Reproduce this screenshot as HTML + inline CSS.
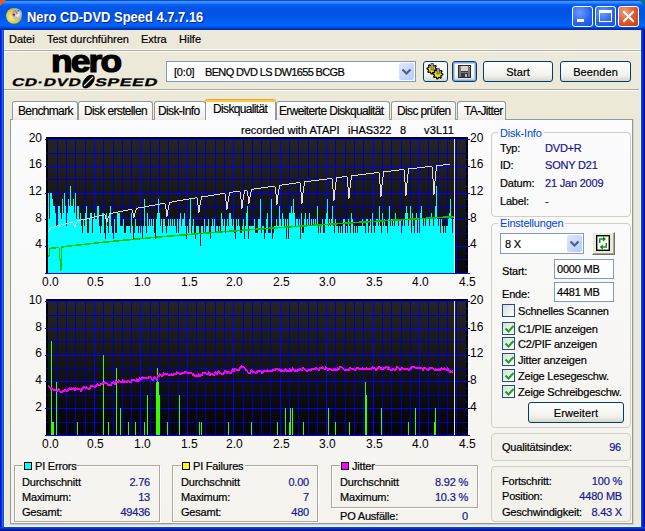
<!DOCTYPE html>
<html><head><meta charset="utf-8">
<style>
*{box-sizing:border-box}
html,body{margin:0;padding:0}
body{width:645px;height:531px;overflow:hidden;position:relative;background:#0a3fc8;font-family:"Liberation Sans",sans-serif;font-size:11px;color:#000}
.a{position:absolute}
.t{position:absolute;font-size:11px;line-height:12px;white-space:nowrap;letter-spacing:-0.2px;-webkit-text-stroke:0.2px currentColor}
.r{text-align:right}
.tt{position:absolute;font-size:12px;line-height:14px;white-space:nowrap;letter-spacing:-0.65px;-webkit-text-stroke:0.15px currentColor}
.v{color:#16168e}
#client{position:absolute;left:4px;top:30px;width:637px;height:497px;background:#ece9d8}
.tb{position:absolute;top:6px;width:21px;height:21px;border:1px solid #fff;border-radius:3px}
.btn{position:absolute;border:1px solid #003c74;border-radius:3px;background:linear-gradient(#fefefe,#f2f2ed 70%,#d8d6cc);text-align:center;font-size:11px;line-height:20px;letter-spacing:0.1px;-webkit-text-stroke:0.2px currentColor}
.tab{position:absolute;top:101px;height:19px;border:1px solid #919b9c;border-bottom:none;border-radius:3px 3px 0 0;background:linear-gradient(#fefefe,#f3f2ee 80%,#eae8e0);}
.gb{position:absolute;border:1px solid #d0d0bf;border-radius:4px}
.gl{position:absolute;color:#0046d5;background:#fafafa;padding:0 2px;font-size:11px;line-height:12px;letter-spacing:-0.2px}
.eg{position:absolute;border:1px solid #aca899;box-shadow:1px 1px 0 #fff, inset 1px 1px 0 #fff}
.cb{position:absolute;left:502px;width:13px;height:13px;border:1px solid #1c5180;background:linear-gradient(135deg,#dcdcd7,#fff)}
.ck{position:absolute;left:2px;top:2px}
</style></head><body>
<!-- title bar -->
<div class="a" style="left:0;top:0;width:645px;height:30px;border-radius:7px 7px 0 0;background:linear-gradient(#0a46d8 0,#0a46d8 0.5px,#3d95ff 1.5px,#3088fc 3px,#0a62f4 4.5px,#0056e8 7px,#0054e3 14px,#0058ea 18px,#0062f8 22px,#0062f8 26px,#004ad8 27.5px,#0030b8 29px,#0028a8 30px)"></div>
<div class="a" style="left:0;top:0;width:6px;height:6px;background:#e65a1e;clip-path:polygon(0 0,100% 0,0 100%)"></div>
<div class="a" style="left:639px;top:0;width:6px;height:6px;background:#0a6d8a;clip-path:polygon(0 0,100% 0,100% 100%)"></div>
<div class="a" style="left:0;top:30px;width:4px;height:501px;background:linear-gradient(90deg,#0010c0 0,#0010c0 1px,#0034e0 1px,#0034e0 2px,#1a6cf6 2px,#1a6cf6 3px,#0050e8 3px)"></div>
<div class="a" style="left:641px;top:30px;width:4px;height:501px;background:linear-gradient(90deg,#0044f0 0,#0044f0 1px,#0034dc 1px,#0034dc 2px,#0020b0 2px,#0020b0 3px,#00108c 3px)"></div>
<div class="a" style="left:0;top:527px;width:645px;height:4px;background:linear-gradient(#0044f0 0,#0044f0 1px,#0034dc 1px,#0034dc 2px,#0020b0 2px,#0020b0 3px,#00108c 3px)"></div>
<!-- app icon -->
<svg class="a" style="left:5px;top:6px" width="19" height="19" viewBox="0 0 19 19">
<defs><radialGradient id="dg" cx="0.35" cy="0.6" r="0.75"><stop offset="0" stop-color="#f4ec90"/><stop offset="0.55" stop-color="#dcc838"/><stop offset="1" stop-color="#b09a18"/></radialGradient>
<radialGradient id="bg2" cx="0.6" cy="0.6" r="0.6"><stop offset="0" stop-color="#ffffff"/><stop offset="1" stop-color="#58a8e8"/></radialGradient></defs>
<circle cx="9" cy="9.8" r="7.9" fill="url(#dg)"/>
<circle cx="11.7" cy="7.7" r="4.6" fill="url(#bg2)" stroke="#b8b8c0" stroke-width="1.2"/>
<path d="M10 4.5 L12.6 8.2" stroke="#f06a30" stroke-width="1.6"/>
<circle cx="9" cy="8.6" r="1.2" fill="#c01010"/>
<circle cx="13.5" cy="4.6" r="1" fill="#20a040"/>
<circle cx="9.6" cy="6.2" r="0.8" fill="#f0d020"/>
</svg>
<div class="a" style="left:27px;top:9px;font-size:14.5px;font-weight:bold;color:#fff;line-height:17px;text-shadow:1px 1px 0 #0a1e8c;letter-spacing:0px;transform-origin:0 0;transform:scaleX(0.893)">Nero CD-DVD Speed 4.7.7.16</div>
<!-- title buttons -->
<div class="tb" style="left:572px;background:radial-gradient(circle at 35% 30%,#6a9cff,#2a62f0 60%,#1a4ed8)"><div class="a" style="left:4px;top:12px;width:7px;height:3px;background:#fff"></div></div>
<div class="tb" style="left:595px;background:radial-gradient(circle at 35% 30%,#6a9cff,#2a62f0 60%,#1a4ed8)"><div class="a" style="left:3px;top:3px;width:13px;height:12px;border:1px solid #fff;border-top-width:3px"></div></div>
<div class="tb" style="left:618px;background:radial-gradient(circle at 30% 25%,#f0a080,#e05a30 50%,#c83a10)"><svg class="a" style="left:0;top:0" width="19" height="19"><path d="M5 5 L14 14 M14 5 L5 14" stroke="#fff" stroke-width="2" stroke-linecap="square"/></svg></div>

<div id="client"></div>
<div class="a" style="left:4px;top:30px;width:1px;height:497px;background:#fbf4dc"></div>
<div class="a" style="left:640px;top:30px;width:1px;height:497px;background:#fbf4dc"></div>
<div class="a" style="left:4px;top:526px;width:637px;height:1px;background:#fbf4dc"></div>
<!-- menu -->
<div class="t" style="left:9px;top:33px;letter-spacing:0">Datei</div>
<div class="t" style="left:47px;top:33px;letter-spacing:0">Test durchführen</div>
<div class="t" style="left:141px;top:33px;letter-spacing:0">Extra</div>
<div class="t" style="left:179px;top:33px;letter-spacing:0">Hilfe</div>
<div class="a" style="left:4px;top:49px;width:637px;height:1px;background:#fff"></div>
<div class="a" style="left:4px;top:50px;width:637px;height:1px;background:#aca899"></div>
<div class="a" style="left:4px;top:51px;width:637px;height:1px;background:#fff"></div>
<div class="a" style="left:4px;top:89px;width:635px;height:1px;background:#aca899"></div>
<div class="a" style="left:4px;top:90px;width:635px;height:1px;background:#fff"></div>

<!-- logo -->
<div class="a" style="left:51px;top:45px;font-size:31px;font-weight:bold;line-height:34px;letter-spacing:-1.6px;-webkit-text-stroke:1.2px #000;transform-origin:0 0;transform:scaleX(1.14)">nero</div>
<div class="a" style="left:14px;top:76px;font-size:11px;font-weight:bold;line-height:12px;transform-origin:0 0;transform:scaleX(1.53) skewX(-10deg);-webkit-text-stroke:0.25px #000;letter-spacing:0.4px">CD·DVD</div>
<div class="a" style="left:97px;top:76px;font-size:11px;font-weight:bold;line-height:12px;transform-origin:0 0;transform:scaleX(1.6) skewX(-10deg);-webkit-text-stroke:0.25px #000;letter-spacing:0.4px">SPEED</div>
<svg class="a" style="left:80px;top:73px" width="17" height="17"><ellipse cx="8.5" cy="8.5" rx="4.6" ry="8" transform="rotate(40 8.5 8.5)" fill="#000"/><path d="M4 13 L13 4" stroke="#ece9d8" stroke-width="1.1"/></svg>

<!-- drive combo -->
<div class="a" style="left:166px;top:61px;width:250px;height:21px;border:1px solid #7f9db9;background:#fff"></div>
<div class="t" style="left:174px;top:66px">[0:0]</div><div class="t" style="left:205px;top:66px;letter-spacing:-0.65px">BENQ DVD LS DW1655 BCGB</div>
<div class="a" style="left:399px;top:63px;width:15px;height:17px;border-radius:2px;background:linear-gradient(135deg,#e0e8fe,#b4cbfa)"><svg class="a" style="left:2px;top:5px" width="11" height="8"><path d="M1.5 1.5 L5.5 5.5 L9.5 1.5" stroke="#4d6185" stroke-width="2.2" fill="none"/></svg></div>

<!-- icon buttons -->
<div class="btn" style="left:423px;top:61px;width:25px;height:21px"></div>
<svg class="a" style="left:424px;top:62px" width="24" height="20">
<g fill="#f4ec00" stroke="#000" stroke-width="1.2" stroke-linejoin="round">
<polygon points="13.0,7.0 12.9,8.0 11.3,8.4 11.0,9.0 11.5,10.5 10.8,11.2 9.4,10.3 8.7,10.5 8.0,12.0 7.0,11.9 6.6,10.3 6.0,10.0 4.5,10.5 3.8,9.8 4.7,8.4 4.5,7.7 3.0,7.0 3.1,6.0 4.7,5.6 5.0,5.0 4.5,3.5 5.2,2.8 6.6,3.7 7.3,3.5 8.0,2.0 9.0,2.1 9.4,3.7 10.0,4.0 11.5,3.5 12.2,4.2 11.3,5.6 11.5,6.3"/>
<polygon transform="translate(0.3,-0.5)" points="18.5,12.5 18.4,13.5 16.8,13.9 16.5,14.5 17.0,16.0 16.3,16.7 14.9,15.8 14.2,16.0 13.5,17.5 12.5,17.4 12.1,15.8 11.5,15.5 10.0,16.0 9.3,15.3 10.2,13.9 10.0,13.2 8.5,12.5 8.6,11.5 10.2,11.1 10.5,10.5 10.0,9.0 10.7,8.3 12.1,9.2 12.8,9.0 13.5,7.5 14.5,7.6 14.9,9.2 15.5,9.5 17.0,9.0 17.7,9.7 16.8,11.1 17.0,11.8"/>
</g>
<rect x="7" y="1.5" width="2.2" height="6.5" fill="#b0b0c0" stroke="#303030" stroke-width="0.6"/>
<rect x="13" y="6.5" width="2.2" height="5.5" fill="#b0b0c0" stroke="#303030" stroke-width="0.6"/>
</svg>
<div class="btn" style="left:452px;top:61px;width:25px;height:21px;box-shadow:inset 0 0 0 1px #7da2ce,inset 0 0 0 2px #b6ceef"></div>
<svg class="a" style="left:458px;top:65px" width="13" height="13" shape-rendering="crispEdges">
<rect x="0" y="0" width="13" height="13" fill="#2c2c2c"/>
<rect x="1" y="1" width="11" height="11" fill="#787878"/>
<rect x="3" y="1" width="7" height="5" fill="#d4d4d4"/>
<rect x="3" y="6" width="7" height="1" fill="#3c3c3c"/>
<rect x="3" y="8" width="7" height="4" fill="#3a3a3a"/>
<rect x="7" y="9" width="2" height="3" fill="#b8b8b8"/>
<rect x="11" y="1" width="1" height="1" fill="#ffffff"/>
</svg>
<div class="btn" style="left:483px;top:61px;width:70px;height:21px">Start</div>
<div class="btn" style="left:560px;top:61px;width:71px;height:21px">Beenden</div>

<!-- tab panel -->
<div class="a" style="left:10px;top:119px;width:624px;height:406px;background:#d6d3c6"></div>
<div class="a" style="left:10px;top:119px;width:623px;height:405px;border:1px solid #919b9c;background:linear-gradient(#fcfcfe,#f4f3ee)"></div>
<!-- tabs -->
<div class="tab" style="left:12px;width:66px"><div class="tt" style="left:5px;top:2px">Benchmark</div></div>
<div class="tab" style="left:78px;width:75px"><div class="tt" style="left:5px;top:2px">Disk erstellen</div></div>
<div class="tab" style="left:154px;width:52px"><div class="tt" style="left:3px;top:2px">Disk-Info</div></div>
<div class="tab" style="left:276px;width:114px"><div class="tt" style="left:2px;top:2px">Erweiterte Diskqualität</div></div>
<div class="tab" style="left:391px;width:65px"><div class="tt" style="left:5px;top:2px">Disc prüfen</div></div>
<div class="tab" style="left:457px;width:49px"><div class="tt" style="left:6px;top:2px">TA-Jitter</div></div>
<div class="a" style="left:205px;top:99px;width:71px;height:21px;border:1px solid #919b9c;border-top:none;border-bottom:none;border-radius:3px 3px 0 0;background:#fcfcfe"></div>
<div class="a" style="left:205px;top:99px;width:71px;height:3px;border-radius:3px 3px 0 0;background:linear-gradient(#e68b2c,#ffc73c 1px,#ffc73c)"></div>
<div class="tt" style="left:213px;top:102px">Diskqualität</div>

<!-- header -->
<div class="t" style="left:241px;top:124px;letter-spacing:0">recorded with ATAPI</div>
<div class="t" style="left:348px;top:124px;letter-spacing:0">iHAS322</div>
<div class="t" style="left:400px;top:124px">8</div>
<div class="t" style="left:424px;top:124px;letter-spacing:0.2px">v3L11</div>

<svg width="645" height="531" style="position:absolute;left:0;top:0" shape-rendering="crispEdges">
<defs><linearGradient id="bgt" x1="0" y1="0" x2="0" y2="1"><stop offset="0" stop-color="#242424"/><stop offset="1" stop-color="#080808"/></linearGradient><linearGradient id="bgb" x1="0" y1="0" x2="0" y2="1"><stop offset="0" stop-color="#242424"/><stop offset="1" stop-color="#040404"/></linearGradient></defs>
<rect x="46" y="137" width="422" height="137" fill="#000"/>
<rect x="48" y="139" width="418" height="134" fill="url(#bgt)"/>
<rect x="57" y="139" width="1" height="135" fill="#0000b0"/>
<rect x="66" y="139" width="1" height="135" fill="#0000b0"/>
<rect x="75" y="139" width="1" height="135" fill="#0000b0"/>
<rect x="85" y="139" width="1" height="135" fill="#0000b0"/>
<rect x="94" y="139" width="1" height="135" fill="#0000ff"/>
<rect x="103" y="139" width="1" height="135" fill="#0000b0"/>
<rect x="113" y="139" width="1" height="135" fill="#0000b0"/>
<rect x="122" y="139" width="1" height="135" fill="#0000b0"/>
<rect x="131" y="139" width="1" height="135" fill="#0000b0"/>
<rect x="140" y="139" width="1" height="135" fill="#0000ff"/>
<rect x="150" y="139" width="1" height="135" fill="#0000b0"/>
<rect x="159" y="139" width="1" height="135" fill="#0000b0"/>
<rect x="168" y="139" width="1" height="135" fill="#0000b0"/>
<rect x="178" y="139" width="1" height="135" fill="#0000b0"/>
<rect x="187" y="139" width="1" height="135" fill="#0000ff"/>
<rect x="196" y="139" width="1" height="135" fill="#0000b0"/>
<rect x="205" y="139" width="1" height="135" fill="#0000b0"/>
<rect x="215" y="139" width="1" height="135" fill="#0000b0"/>
<rect x="224" y="139" width="1" height="135" fill="#0000b0"/>
<rect x="233" y="139" width="1" height="135" fill="#0000ff"/>
<rect x="243" y="139" width="1" height="135" fill="#0000b0"/>
<rect x="252" y="139" width="1" height="135" fill="#0000b0"/>
<rect x="261" y="139" width="1" height="135" fill="#0000b0"/>
<rect x="270" y="139" width="1" height="135" fill="#0000b0"/>
<rect x="280" y="139" width="1" height="135" fill="#0000ff"/>
<rect x="289" y="139" width="1" height="135" fill="#0000b0"/>
<rect x="298" y="139" width="1" height="135" fill="#0000b0"/>
<rect x="308" y="139" width="1" height="135" fill="#0000b0"/>
<rect x="317" y="139" width="1" height="135" fill="#0000b0"/>
<rect x="326" y="139" width="1" height="135" fill="#0000ff"/>
<rect x="335" y="139" width="1" height="135" fill="#0000b0"/>
<rect x="345" y="139" width="1" height="135" fill="#0000b0"/>
<rect x="354" y="139" width="1" height="135" fill="#0000b0"/>
<rect x="363" y="139" width="1" height="135" fill="#0000b0"/>
<rect x="373" y="139" width="1" height="135" fill="#0000ff"/>
<rect x="382" y="139" width="1" height="135" fill="#0000b0"/>
<rect x="391" y="139" width="1" height="135" fill="#0000b0"/>
<rect x="401" y="139" width="1" height="135" fill="#0000b0"/>
<rect x="410" y="139" width="1" height="135" fill="#0000b0"/>
<rect x="419" y="139" width="1" height="135" fill="#0000ff"/>
<rect x="428" y="139" width="1" height="135" fill="#0000b0"/>
<rect x="438" y="139" width="1" height="135" fill="#0000b0"/>
<rect x="447" y="139" width="1" height="135" fill="#0000b0"/>
<rect x="456" y="139" width="1" height="135" fill="#0000b0"/>
<rect x="45" y="139" width="425" height="1" fill="#0000ff"/>
<rect x="46" y="153" width="422" height="1" fill="#0000b0"/>
<rect x="45" y="166" width="425" height="1" fill="#0000ff"/>
<rect x="46" y="179" width="422" height="1" fill="#0000b0"/>
<rect x="45" y="193" width="425" height="1" fill="#0000ff"/>
<rect x="46" y="206" width="422" height="1" fill="#0000b0"/>
<rect x="45" y="219" width="425" height="1" fill="#0000ff"/>
<rect x="46" y="233" width="422" height="1" fill="#0000b0"/>
<rect x="45" y="246" width="425" height="1" fill="#0000ff"/>
<rect x="46" y="259" width="422" height="1" fill="#0000b0"/>
<rect x="45" y="273" width="425" height="1" fill="#0000ff"/>
<rect x="466" y="146" width="2" height="1" fill="#0000ff"/>
<rect x="466" y="159" width="2" height="1" fill="#0000ff"/>
<rect x="466" y="173" width="2" height="1" fill="#0000ff"/>
<rect x="466" y="186" width="2" height="1" fill="#0000ff"/>
<rect x="466" y="199" width="2" height="1" fill="#0000ff"/>
<rect x="466" y="213" width="2" height="1" fill="#0000ff"/>
<rect x="466" y="226" width="2" height="1" fill="#0000ff"/>
<rect x="466" y="239" width="2" height="1" fill="#0000ff"/>
<rect x="466" y="253" width="2" height="1" fill="#0000ff"/>
<rect x="466" y="266" width="2" height="1" fill="#0000ff"/>
<path d="M48 273V193h1V219h1V193h1V193h1V199h1V206h1V206h1V213h1V226h1V226h1V206h1V206h1V213h1V219h1V199h1V213h1V193h1V206h1V226h1V213h1V199h1V206h1V186h1V206h1V206h1V199h1V213h1V193h1V219h1V206h1V206h1V219h1V213h1V226h1V233h1V219h1V226h1V213h1V206h1V233h1V233h1V219h1V213h1V213h1V233h1V219h1V213h1V219h1V219h1V206h1V206h1V226h1V233h1V226h1V213h1V213h1V233h1V239h1V213h1V226h1V233h1V213h1V206h1V226h1V233h1V239h1V219h1V233h1V233h1V213h1V213h1V213h1V226h1V226h1V226h1V219h1V233h1V233h1V226h1V226h1V226h1V226h1V233h1V213h1V226h1V239h1V233h1V219h1V226h1V226h1V233h1V226h1V233h1V226h1V239h1V226h1V199h1V226h1V233h1V213h1V226h1V219h1V226h1V219h1V226h1V219h1V233h1V239h1V219h1V213h1V199h1V213h1V226h1V219h1V233h1V219h1V219h1V226h1V233h1V226h1V219h1V226h1V219h1V226h1V219h1V226h1V219h1V226h1V233h1V219h1V233h1V219h1V213h1V226h1V219h1V219h1V213h1V226h1V239h1V226h1V233h1V219h1V199h1V233h1V226h1V219h1V233h1V239h1V226h1V226h1V226h1V233h1V246h1V226h1V226h1V233h1V219h1V233h1V226h1V226h1V219h1V233h1V239h1V226h1V219h1V226h1V219h1V233h1V226h1V226h1V233h1V226h1V233h1V213h1V219h1V226h1V219h1V233h1V226h1V219h1V226h1V213h1V213h1V219h1V226h1V219h1V233h1V239h1V219h1V226h1V219h1V226h1V233h1V233h1V226h1V219h1V239h1V226h1V213h1V206h1V239h1V226h1V226h1V226h1V226h1V226h1V219h1V233h1V233h1V233h1V219h1V219h1V199h1V233h1V226h1V226h1V239h1V233h1V219h1V213h1V233h1V233h1V233h1V199h1V239h1V233h1V226h1V226h1V219h1V226h1V226h1V206h1V219h1V226h1V213h1V219h1V226h1V219h1V239h1V219h1V239h1V213h1V213h1V206h1V213h1V199h1V213h1V226h1V219h1V219h1V226h1V219h1V239h1V213h1V233h1V233h1V219h1V213h1V226h1V219h1V226h1V213h1V226h1V219h1V226h1V219h1V226h1V219h1V226h1V206h1V233h1V226h1V233h1V226h1V219h1V233h1V233h1V219h1V213h1V199h1V226h1V219h1V226h1V219h1V206h1V226h1V233h1V219h1V226h1V226h1V233h1V226h1V233h1V226h1V233h1V219h1V219h1V233h1V226h1V233h1V219h1V226h1V233h1V213h1V219h1V233h1V226h1V233h1V226h1V233h1V226h1V226h1V226h1V226h1V219h1V226h1V226h1V233h1V219h1V219h1V233h1V226h1V219h1V233h1V213h1V226h1V233h1V226h1V219h1V219h1V226h1V206h1V226h1V233h1V213h1V226h1V219h1V226h1V226h1V233h1V219h1V206h1V226h1V219h1V226h1V219h1V226h1V213h1V219h1V219h1V226h1V219h1V219h1V233h1V226h1V219h1V226h1V213h1V206h1V213h1V226h1V219h1V206h1V233h1V213h1V226h1V233h1V219h1V213h1V233h1V219h1V233h1V213h1V206h1V219h1V226h1V219h1V226h1V219h1V219h1V219h1V226h1V219h1V213h1V219h1V226h1V219h1V206h1V186h1V219h1V226h1V219h1V233h1V219h1V226h1V233h1V226h1V233h1V226h1V226h1V219h1V213h1V199h1V219h1V233h1V219h1V233h1V273Z" fill="#00ffff"/>
<path d="M48 255h1v1h-1ZM49 248h1V255h-1ZM50 248h1v1h-1ZM51 247h1V248h-1ZM52 247h1v1h-1ZM53 247h1v1h-1ZM54 247h1v1h-1ZM55 247h1v1h-1ZM56 247h1v1h-1ZM57 247h1v1h-1ZM58 247h1v1h-1ZM59 248h1V259h-1ZM60 259h1V270h-1ZM61 246h1V269h-1ZM62 246h1v1h-1ZM63 246h1v1h-1ZM64 246h1v1h-1ZM65 246h1v1h-1ZM66 246h1v1h-1ZM67 245h1V246h-1ZM68 245h1v1h-1ZM69 245h1v1h-1ZM70 245h1v1h-1ZM71 245h1v1h-1ZM72 245h1v1h-1ZM73 245h1v1h-1ZM74 245h1v1h-1ZM75 245h1v1h-1ZM76 244h1V245h-1ZM77 244h1v1h-1ZM78 244h1v1h-1ZM79 244h1v1h-1ZM80 244h1v1h-1ZM81 244h1v1h-1ZM82 244h1v1h-1ZM83 244h1v1h-1ZM84 244h1v1h-1ZM85 243h1V244h-1ZM86 243h1v1h-1ZM87 243h1v1h-1ZM88 243h1v1h-1ZM89 243h1v1h-1ZM90 243h1v1h-1ZM91 243h1v1h-1ZM92 243h1v1h-1ZM93 243h1v1h-1ZM94 242h1V243h-1ZM95 242h1v1h-1ZM96 242h1v1h-1ZM97 242h1v1h-1ZM98 242h1v1h-1ZM99 242h1v1h-1ZM100 242h1v1h-1ZM101 242h1v1h-1ZM102 242h1v1h-1ZM103 241h1V242h-1ZM104 241h1v1h-1ZM105 241h1v1h-1ZM106 241h1v1h-1ZM107 241h1v1h-1ZM108 241h1v1h-1ZM109 241h1v1h-1ZM110 241h1v1h-1ZM111 241h1v1h-1ZM112 241h1v1h-1ZM113 240h1V241h-1ZM114 240h1v1h-1ZM115 240h1v1h-1ZM116 240h1v1h-1ZM117 240h1v1h-1ZM118 240h1v1h-1ZM119 240h1v1h-1ZM120 240h1v1h-1ZM121 240h1v1h-1ZM122 240h1v1h-1ZM123 239h1V240h-1ZM124 239h1v1h-1ZM125 239h1v1h-1ZM126 239h1v1h-1ZM127 239h1v1h-1ZM128 239h1v1h-1ZM129 239h1v1h-1ZM130 239h1v1h-1ZM131 239h1v1h-1ZM132 239h1v1h-1ZM133 239h1v1h-1ZM134 238h1V239h-1ZM135 238h1v1h-1ZM136 238h1v1h-1ZM137 238h1v1h-1ZM138 238h1v1h-1ZM139 238h1v1h-1ZM140 238h1v1h-1ZM141 238h1v1h-1ZM142 238h1v1h-1ZM143 238h1v1h-1ZM144 238h1v1h-1ZM145 237h1V238h-1ZM146 237h1v1h-1ZM147 237h1v1h-1ZM148 237h1v1h-1ZM149 237h1v1h-1ZM150 237h1v1h-1ZM151 237h1v1h-1ZM152 237h1v1h-1ZM153 237h1v1h-1ZM154 237h1v1h-1ZM155 237h1v1h-1ZM156 236h1V237h-1ZM157 236h1v1h-1ZM158 236h1v1h-1ZM159 236h1v1h-1ZM160 236h1v1h-1ZM161 236h1v1h-1ZM162 236h1v1h-1ZM163 236h1v1h-1ZM164 236h1v1h-1ZM165 236h1v1h-1ZM166 236h1v1h-1ZM167 235h1V236h-1ZM168 235h1v1h-1ZM169 235h1v1h-1ZM170 235h1v1h-1ZM171 235h1v1h-1ZM172 235h1v1h-1ZM173 235h1v1h-1ZM174 235h1v1h-1ZM175 235h1v1h-1ZM176 235h1v1h-1ZM177 235h1v1h-1ZM178 235h1v1h-1ZM179 234h1V235h-1ZM180 234h1v1h-1ZM181 234h1v1h-1ZM182 234h1v1h-1ZM183 234h1v1h-1ZM184 234h1v1h-1ZM185 234h1v1h-1ZM186 234h1v1h-1ZM187 234h1v1h-1ZM188 234h1v1h-1ZM189 234h1v1h-1ZM190 234h1v1h-1ZM191 233h1V234h-1ZM192 233h1v1h-1ZM193 233h1v1h-1ZM194 233h1v1h-1ZM195 233h1v1h-1ZM196 233h1v1h-1ZM197 233h1v1h-1ZM198 233h1v1h-1ZM199 233h1v1h-1ZM200 233h1v1h-1ZM201 233h1v1h-1ZM202 233h1v1h-1ZM203 232h1V233h-1ZM204 232h1v1h-1ZM205 232h1v1h-1ZM206 232h1v1h-1ZM207 232h1v1h-1ZM208 232h1v1h-1ZM209 232h1v1h-1ZM210 232h1v1h-1ZM211 232h1v1h-1ZM212 232h1v1h-1ZM213 232h1v1h-1ZM214 232h1v1h-1ZM215 232h1v1h-1ZM216 231h1V232h-1ZM217 231h1v1h-1ZM218 231h1v1h-1ZM219 231h1v1h-1ZM220 231h1v1h-1ZM221 231h1v1h-1ZM222 231h1v1h-1ZM223 231h1v1h-1ZM224 231h1v1h-1ZM225 231h1v1h-1ZM226 231h1v1h-1ZM227 231h1v1h-1ZM228 231h1v1h-1ZM229 230h1V231h-1ZM230 230h1v1h-1ZM231 230h1v1h-1ZM232 230h1v1h-1ZM233 230h1v1h-1ZM234 230h1v1h-1ZM235 230h1v1h-1ZM236 230h1v1h-1ZM237 230h1v1h-1ZM238 230h1v1h-1ZM239 230h1v1h-1ZM240 230h1v1h-1ZM241 230h1v1h-1ZM242 229h1V230h-1ZM243 229h1v1h-1ZM244 229h1v1h-1ZM245 229h1v1h-1ZM246 229h1v1h-1ZM247 229h1v1h-1ZM248 229h1v1h-1ZM249 229h1v1h-1ZM250 229h1v1h-1ZM251 229h1v1h-1ZM252 229h1v1h-1ZM253 229h1v1h-1ZM254 229h1v1h-1ZM255 229h1v1h-1ZM256 228h1V229h-1ZM257 228h1v1h-1ZM258 228h1v1h-1ZM259 228h1v1h-1ZM260 228h1v1h-1ZM261 228h1v1h-1ZM262 228h1v1h-1ZM263 228h1v1h-1ZM264 228h1v1h-1ZM265 228h1v1h-1ZM266 228h1v1h-1ZM267 228h1v1h-1ZM268 228h1v1h-1ZM269 227h1V228h-1ZM270 227h1v1h-1ZM271 227h1v1h-1ZM272 227h1v1h-1ZM273 227h1v1h-1ZM274 227h1v1h-1ZM275 227h1v1h-1ZM276 227h1v1h-1ZM277 227h1v1h-1ZM278 227h1v1h-1ZM279 227h1v1h-1ZM280 227h1v1h-1ZM281 227h1v1h-1ZM282 227h1v1h-1ZM283 227h1v1h-1ZM284 226h1V227h-1ZM285 226h1v1h-1ZM286 226h1v1h-1ZM287 226h1v1h-1ZM288 226h1v1h-1ZM289 226h1v1h-1ZM290 226h1v1h-1ZM291 226h1v1h-1ZM292 226h1v1h-1ZM293 226h1v1h-1ZM294 226h1v1h-1ZM295 226h1v1h-1ZM296 226h1v1h-1ZM297 226h1v1h-1ZM298 225h1V226h-1ZM299 225h1v1h-1ZM300 225h1v1h-1ZM301 225h1v1h-1ZM302 225h1v1h-1ZM303 225h1v1h-1ZM304 225h1v1h-1ZM305 225h1v1h-1ZM306 225h1v1h-1ZM307 225h1v1h-1ZM308 225h1v1h-1ZM309 225h1v1h-1ZM310 225h1v1h-1ZM311 225h1v1h-1ZM312 225h1v1h-1ZM313 224h1V225h-1ZM314 224h1v1h-1ZM315 224h1v1h-1ZM316 224h1v1h-1ZM317 224h1v1h-1ZM318 224h1v1h-1ZM319 224h1v1h-1ZM320 224h1v1h-1ZM321 224h1v1h-1ZM322 224h1v1h-1ZM323 224h1v1h-1ZM324 224h1v1h-1ZM325 224h1v1h-1ZM326 224h1v1h-1ZM327 224h1v1h-1ZM328 223h1V224h-1ZM329 223h1v1h-1ZM330 223h1v1h-1ZM331 223h1v1h-1ZM332 223h1v1h-1ZM333 223h1v1h-1ZM334 223h1v1h-1ZM335 223h1v1h-1ZM336 223h1v1h-1ZM337 223h1v1h-1ZM338 223h1v1h-1ZM339 223h1v1h-1ZM340 223h1v1h-1ZM341 223h1v1h-1ZM342 223h1v1h-1ZM343 223h1v1h-1ZM344 222h1V223h-1ZM345 222h1v1h-1ZM346 222h1v1h-1ZM347 222h1v1h-1ZM348 222h1v1h-1ZM349 222h1v1h-1ZM350 222h1v1h-1ZM351 222h1v1h-1ZM352 222h1v1h-1ZM353 222h1v1h-1ZM354 222h1v1h-1ZM355 222h1v1h-1ZM356 222h1v1h-1ZM357 222h1v1h-1ZM358 222h1v1h-1ZM359 221h1V222h-1ZM360 221h1v1h-1ZM361 221h1v1h-1ZM362 221h1v1h-1ZM363 221h1v1h-1ZM364 221h1v1h-1ZM365 221h1v1h-1ZM366 221h1v1h-1ZM367 221h1v1h-1ZM368 221h1v1h-1ZM369 221h1v1h-1ZM370 221h1v1h-1ZM371 221h1v1h-1ZM372 221h1v1h-1ZM373 221h1v1h-1ZM374 221h1v1h-1ZM375 221h1v1h-1ZM376 220h1V221h-1ZM377 220h1v1h-1ZM378 220h1v1h-1ZM379 220h1v1h-1ZM380 220h1v1h-1ZM381 220h1v1h-1ZM382 220h1v1h-1ZM383 220h1v1h-1ZM384 220h1v1h-1ZM385 220h1v1h-1ZM386 220h1v1h-1ZM387 220h1v1h-1ZM388 220h1v1h-1ZM389 220h1v1h-1ZM390 220h1v1h-1ZM391 220h1v1h-1ZM392 219h1V220h-1ZM393 219h1v1h-1ZM394 219h1v1h-1ZM395 219h1v1h-1ZM396 219h1v1h-1ZM397 219h1v1h-1ZM398 219h1v1h-1ZM399 219h1v1h-1ZM400 219h1v1h-1ZM401 219h1v1h-1ZM402 219h1v1h-1ZM403 219h1v1h-1ZM404 219h1v1h-1ZM405 219h1v1h-1ZM406 219h1v1h-1ZM407 219h1v1h-1ZM408 219h1v1h-1ZM409 218h1V219h-1ZM410 218h1v1h-1ZM411 218h1v1h-1ZM412 218h1v1h-1ZM413 218h1v1h-1ZM414 218h1v1h-1ZM415 218h1v1h-1ZM416 218h1v1h-1ZM417 218h1v1h-1ZM418 218h1v1h-1ZM419 218h1v1h-1ZM420 218h1v1h-1ZM421 218h1v1h-1ZM422 218h1v1h-1ZM423 218h1v1h-1ZM424 218h1v1h-1ZM425 218h1v1h-1ZM426 217h1V218h-1ZM427 217h1v1h-1ZM428 217h1v1h-1ZM429 217h1v1h-1ZM430 217h1v1h-1ZM431 217h1v1h-1ZM432 217h1v1h-1ZM433 217h1v1h-1ZM434 217h1v1h-1ZM435 217h1v1h-1ZM436 217h1v1h-1ZM437 217h1v1h-1ZM438 217h1v1h-1ZM439 217h1v1h-1ZM440 217h1v1h-1ZM441 217h1v1h-1ZM442 217h1v1h-1ZM443 216h1V217h-1ZM444 216h1v1h-1ZM445 216h1v1h-1ZM446 216h1v1h-1ZM447 216h1v1h-1ZM448 216h1v1h-1ZM449 216h1v1h-1ZM450 216h1v1h-1ZM451 216h1v1h-1ZM452 216h1v1h-1ZM453 216h1v1h-1ZM454 216h1v1h-1ZM48 256h1v1h-1ZM49 249h1V256h-1ZM50 248h1V249h-1ZM51 248h1v1h-1ZM52 248h1v1h-1ZM53 248h1v1h-1ZM54 248h1v1h-1ZM55 248h1v1h-1ZM56 247h1V248h-1ZM57 247h1v1h-1ZM58 247h1v1h-1ZM59 248h1V260h-1ZM60 260h1V271h-1ZM61 247h1V270h-1ZM62 247h1v1h-1ZM63 247h1v1h-1ZM64 246h1V247h-1ZM65 246h1v1h-1ZM66 246h1v1h-1ZM67 246h1v1h-1ZM68 246h1v1h-1ZM69 246h1v1h-1ZM70 246h1v1h-1ZM71 246h1v1h-1ZM72 245h1V246h-1ZM73 245h1v1h-1ZM74 245h1v1h-1ZM75 245h1v1h-1ZM76 245h1v1h-1ZM77 245h1v1h-1ZM78 245h1v1h-1ZM79 245h1v1h-1ZM80 245h1v1h-1ZM81 244h1V245h-1ZM82 244h1v1h-1ZM83 244h1v1h-1ZM84 244h1v1h-1ZM85 244h1v1h-1ZM86 244h1v1h-1ZM87 244h1v1h-1ZM88 244h1v1h-1ZM89 244h1v1h-1ZM90 243h1V244h-1ZM91 243h1v1h-1ZM92 243h1v1h-1ZM93 243h1v1h-1ZM94 243h1v1h-1ZM95 243h1v1h-1ZM96 243h1v1h-1ZM97 243h1v1h-1ZM98 243h1v1h-1ZM99 242h1V243h-1ZM100 242h1v1h-1ZM101 242h1v1h-1ZM102 242h1v1h-1ZM103 242h1v1h-1ZM104 242h1v1h-1ZM105 242h1v1h-1ZM106 242h1v1h-1ZM107 242h1v1h-1ZM108 242h1v1h-1ZM109 241h1V242h-1ZM110 241h1v1h-1ZM111 241h1v1h-1ZM112 241h1v1h-1ZM113 241h1v1h-1ZM114 241h1v1h-1ZM115 241h1v1h-1ZM116 241h1v1h-1ZM117 241h1v1h-1ZM118 241h1v1h-1ZM119 240h1V241h-1ZM120 240h1v1h-1ZM121 240h1v1h-1ZM122 240h1v1h-1ZM123 240h1v1h-1ZM124 240h1v1h-1ZM125 240h1v1h-1ZM126 240h1v1h-1ZM127 240h1v1h-1ZM128 240h1v1h-1ZM129 240h1v1h-1ZM130 239h1V240h-1ZM131 239h1v1h-1ZM132 239h1v1h-1ZM133 239h1v1h-1ZM134 239h1v1h-1ZM135 239h1v1h-1ZM136 239h1v1h-1ZM137 239h1v1h-1ZM138 239h1v1h-1ZM139 239h1v1h-1ZM140 238h1V239h-1ZM141 238h1v1h-1ZM142 238h1v1h-1ZM143 238h1v1h-1ZM144 238h1v1h-1ZM145 238h1v1h-1ZM146 238h1v1h-1ZM147 238h1v1h-1ZM148 238h1v1h-1ZM149 238h1v1h-1ZM150 238h1v1h-1ZM151 237h1V238h-1ZM152 237h1v1h-1ZM153 237h1v1h-1ZM154 237h1v1h-1ZM155 237h1v1h-1ZM156 237h1v1h-1ZM157 237h1v1h-1ZM158 237h1v1h-1ZM159 237h1v1h-1ZM160 237h1v1h-1ZM161 237h1v1h-1ZM162 236h1V237h-1ZM163 236h1v1h-1ZM164 236h1v1h-1ZM165 236h1v1h-1ZM166 236h1v1h-1ZM167 236h1v1h-1ZM168 236h1v1h-1ZM169 236h1v1h-1ZM170 236h1v1h-1ZM171 236h1v1h-1ZM172 236h1v1h-1ZM173 236h1v1h-1ZM174 235h1V236h-1ZM175 235h1v1h-1ZM176 235h1v1h-1ZM177 235h1v1h-1ZM178 235h1v1h-1ZM179 235h1v1h-1ZM180 235h1v1h-1ZM181 235h1v1h-1ZM182 235h1v1h-1ZM183 235h1v1h-1ZM184 235h1v1h-1ZM185 235h1v1h-1ZM186 234h1V235h-1ZM187 234h1v1h-1ZM188 234h1v1h-1ZM189 234h1v1h-1ZM190 234h1v1h-1ZM191 234h1v1h-1ZM192 234h1v1h-1ZM193 234h1v1h-1ZM194 234h1v1h-1ZM195 234h1v1h-1ZM196 234h1v1h-1ZM197 234h1v1h-1ZM198 233h1V234h-1ZM199 233h1v1h-1ZM200 233h1v1h-1ZM201 233h1v1h-1ZM202 233h1v1h-1ZM203 233h1v1h-1ZM204 233h1v1h-1ZM205 233h1v1h-1ZM206 233h1v1h-1ZM207 233h1v1h-1ZM208 233h1v1h-1ZM209 233h1v1h-1ZM210 233h1v1h-1ZM211 232h1V233h-1ZM212 232h1v1h-1ZM213 232h1v1h-1ZM214 232h1v1h-1ZM215 232h1v1h-1ZM216 232h1v1h-1ZM217 232h1v1h-1ZM218 232h1v1h-1ZM219 232h1v1h-1ZM220 232h1v1h-1ZM221 232h1v1h-1ZM222 232h1v1h-1ZM223 231h1V232h-1ZM224 231h1v1h-1ZM225 231h1v1h-1ZM226 231h1v1h-1ZM227 231h1v1h-1ZM228 231h1v1h-1ZM229 231h1v1h-1ZM230 231h1v1h-1ZM231 231h1v1h-1ZM232 231h1v1h-1ZM233 231h1v1h-1ZM234 231h1v1h-1ZM235 231h1v1h-1ZM236 231h1v1h-1ZM237 230h1V231h-1ZM238 230h1v1h-1ZM239 230h1v1h-1ZM240 230h1v1h-1ZM241 230h1v1h-1ZM242 230h1v1h-1ZM243 230h1v1h-1ZM244 230h1v1h-1ZM245 230h1v1h-1ZM246 230h1v1h-1ZM247 230h1v1h-1ZM248 230h1v1h-1ZM249 230h1v1h-1ZM250 229h1V230h-1ZM251 229h1v1h-1ZM252 229h1v1h-1ZM253 229h1v1h-1ZM254 229h1v1h-1ZM255 229h1v1h-1ZM256 229h1v1h-1ZM257 229h1v1h-1ZM258 229h1v1h-1ZM259 229h1v1h-1ZM260 229h1v1h-1ZM261 229h1v1h-1ZM262 229h1v1h-1ZM263 229h1v1h-1ZM264 228h1V229h-1ZM265 228h1v1h-1ZM266 228h1v1h-1ZM267 228h1v1h-1ZM268 228h1v1h-1ZM269 228h1v1h-1ZM270 228h1v1h-1ZM271 228h1v1h-1ZM272 228h1v1h-1ZM273 228h1v1h-1ZM274 228h1v1h-1ZM275 228h1v1h-1ZM276 228h1v1h-1ZM277 228h1v1h-1ZM278 227h1V228h-1ZM279 227h1v1h-1ZM280 227h1v1h-1ZM281 227h1v1h-1ZM282 227h1v1h-1ZM283 227h1v1h-1ZM284 227h1v1h-1ZM285 227h1v1h-1ZM286 227h1v1h-1ZM287 227h1v1h-1ZM288 227h1v1h-1ZM289 227h1v1h-1ZM290 227h1v1h-1ZM291 227h1v1h-1ZM292 226h1V227h-1ZM293 226h1v1h-1ZM294 226h1v1h-1ZM295 226h1v1h-1ZM296 226h1v1h-1ZM297 226h1v1h-1ZM298 226h1v1h-1ZM299 226h1v1h-1ZM300 226h1v1h-1ZM301 226h1v1h-1ZM302 226h1v1h-1ZM303 226h1v1h-1ZM304 226h1v1h-1ZM305 226h1v1h-1ZM306 226h1v1h-1ZM307 225h1V226h-1ZM308 225h1v1h-1ZM309 225h1v1h-1ZM310 225h1v1h-1ZM311 225h1v1h-1ZM312 225h1v1h-1ZM313 225h1v1h-1ZM314 225h1v1h-1ZM315 225h1v1h-1ZM316 225h1v1h-1ZM317 225h1v1h-1ZM318 225h1v1h-1ZM319 225h1v1h-1ZM320 225h1v1h-1ZM321 225h1v1h-1ZM322 224h1V225h-1ZM323 224h1v1h-1ZM324 224h1v1h-1ZM325 224h1v1h-1ZM326 224h1v1h-1ZM327 224h1v1h-1ZM328 224h1v1h-1ZM329 224h1v1h-1ZM330 224h1v1h-1ZM331 224h1v1h-1ZM332 224h1v1h-1ZM333 224h1v1h-1ZM334 224h1v1h-1ZM335 224h1v1h-1ZM336 224h1v1h-1ZM337 223h1V224h-1ZM338 223h1v1h-1ZM339 223h1v1h-1ZM340 223h1v1h-1ZM341 223h1v1h-1ZM342 223h1v1h-1ZM343 223h1v1h-1ZM344 223h1v1h-1ZM345 223h1v1h-1ZM346 223h1v1h-1ZM347 223h1v1h-1ZM348 223h1v1h-1ZM349 223h1v1h-1ZM350 223h1v1h-1ZM351 223h1v1h-1ZM352 223h1v1h-1ZM353 222h1V223h-1ZM354 222h1v1h-1ZM355 222h1v1h-1ZM356 222h1v1h-1ZM357 222h1v1h-1ZM358 222h1v1h-1ZM359 222h1v1h-1ZM360 222h1v1h-1ZM361 222h1v1h-1ZM362 222h1v1h-1ZM363 222h1v1h-1ZM364 222h1v1h-1ZM365 222h1v1h-1ZM366 222h1v1h-1ZM367 222h1v1h-1ZM368 222h1v1h-1ZM369 221h1V222h-1ZM370 221h1v1h-1ZM371 221h1v1h-1ZM372 221h1v1h-1ZM373 221h1v1h-1ZM374 221h1v1h-1ZM375 221h1v1h-1ZM376 221h1v1h-1ZM377 221h1v1h-1ZM378 221h1v1h-1ZM379 221h1v1h-1ZM380 221h1v1h-1ZM381 221h1v1h-1ZM382 221h1v1h-1ZM383 221h1v1h-1ZM384 221h1v1h-1ZM385 220h1V221h-1ZM386 220h1v1h-1ZM387 220h1v1h-1ZM388 220h1v1h-1ZM389 220h1v1h-1ZM390 220h1v1h-1ZM391 220h1v1h-1ZM392 220h1v1h-1ZM393 220h1v1h-1ZM394 220h1v1h-1ZM395 220h1v1h-1ZM396 220h1v1h-1ZM397 220h1v1h-1ZM398 220h1v1h-1ZM399 220h1v1h-1ZM400 220h1v1h-1ZM401 220h1v1h-1ZM402 219h1V220h-1ZM403 219h1v1h-1ZM404 219h1v1h-1ZM405 219h1v1h-1ZM406 219h1v1h-1ZM407 219h1v1h-1ZM408 219h1v1h-1ZM409 219h1v1h-1ZM410 219h1v1h-1ZM411 219h1v1h-1ZM412 219h1v1h-1ZM413 219h1v1h-1ZM414 219h1v1h-1ZM415 219h1v1h-1ZM416 219h1v1h-1ZM417 219h1v1h-1ZM418 219h1v1h-1ZM419 218h1V219h-1ZM420 218h1v1h-1ZM421 218h1v1h-1ZM422 218h1v1h-1ZM423 218h1v1h-1ZM424 218h1v1h-1ZM425 218h1v1h-1ZM426 218h1v1h-1ZM427 218h1v1h-1ZM428 218h1v1h-1ZM429 218h1v1h-1ZM430 218h1v1h-1ZM431 218h1v1h-1ZM432 218h1v1h-1ZM433 218h1v1h-1ZM434 218h1v1h-1ZM435 218h1v1h-1ZM436 217h1V218h-1ZM437 217h1v1h-1ZM438 217h1v1h-1ZM439 217h1v1h-1ZM440 217h1v1h-1ZM441 217h1v1h-1ZM442 217h1v1h-1ZM443 217h1v1h-1ZM444 217h1v1h-1ZM445 217h1v1h-1ZM446 217h1v1h-1ZM447 217h1v1h-1ZM448 217h1v1h-1ZM449 217h1v1h-1ZM450 217h1v1h-1ZM451 217h1v1h-1ZM452 217h1v1h-1ZM453 217h1v1h-1ZM454 216h1V217h-1Z" fill="#00c400"/>
<path d="M48 231h1v1h-1ZM49 229h1V231h-1ZM50 227h1V229h-1ZM51 227h1v1h-1ZM52 227h1v1h-1ZM53 227h1v1h-1ZM54 226h1V227h-1ZM55 226h1v1h-1ZM56 226h1v1h-1ZM57 225h1V226h-1ZM58 225h1v1h-1ZM59 225h1v1h-1ZM60 225h1v1h-1ZM61 224h1V225h-1ZM62 224h1v1h-1ZM63 224h1v1h-1ZM64 224h1v1h-1ZM65 223h1V224h-1ZM66 223h1v1h-1ZM67 223h1v1h-1ZM68 223h1v1h-1ZM69 222h1V223h-1ZM70 222h1v1h-1ZM71 222h1v1h-1ZM72 222h1v1h-1ZM73 223h1V225h-1ZM74 225h1V228h-1ZM75 224h1V227h-1ZM76 222h1V224h-1ZM77 220h1V222h-1ZM78 220h1v1h-1ZM79 220h1v1h-1ZM80 220h1v1h-1ZM81 219h1V220h-1ZM82 219h1v1h-1ZM83 219h1v1h-1ZM84 219h1v1h-1ZM85 219h1v1h-1ZM86 218h1V219h-1ZM87 218h1v1h-1ZM88 218h1v1h-1ZM89 218h1v1h-1ZM90 217h1V218h-1ZM91 217h1v1h-1ZM92 217h1v1h-1ZM93 217h1v1h-1ZM94 216h1V217h-1ZM95 216h1v1h-1ZM96 216h1v1h-1ZM97 216h1v1h-1ZM98 216h1v1h-1ZM99 215h1V216h-1ZM100 215h1v1h-1ZM101 215h1v1h-1ZM102 215h1v1h-1ZM103 215h1v1h-1ZM104 214h1V215h-1ZM105 215h1V219h-1ZM106 219h1V223h-1ZM107 218h1V222h-1ZM108 216h1V218h-1ZM109 213h1V216h-1ZM110 213h1v1h-1ZM111 213h1v1h-1ZM112 213h1v1h-1ZM113 212h1V213h-1ZM114 212h1v1h-1ZM115 212h1v1h-1ZM116 212h1v1h-1ZM117 212h1v1h-1ZM118 211h1V212h-1ZM119 211h1v1h-1ZM120 211h1v1h-1ZM121 211h1v1h-1ZM122 211h1v1h-1ZM123 210h1V211h-1ZM124 210h1v1h-1ZM125 210h1v1h-1ZM126 210h1v1h-1ZM127 210h1v1h-1ZM128 209h1V210h-1ZM129 209h1v1h-1ZM130 209h1v1h-1ZM131 209h1v1h-1ZM132 210h1V213h-1ZM133 213h1V218h-1ZM134 213h1V217h-1ZM135 210h1V213h-1ZM136 208h1V210h-1ZM137 208h1v1h-1ZM138 207h1V208h-1ZM139 207h1v1h-1ZM140 207h1v1h-1ZM141 207h1v1h-1ZM142 207h1v1h-1ZM143 207h1v1h-1ZM144 206h1V207h-1ZM145 206h1v1h-1ZM146 206h1v1h-1ZM147 206h1v1h-1ZM148 206h1v1h-1ZM149 205h1V206h-1ZM150 205h1v1h-1ZM151 205h1v1h-1ZM152 205h1v1h-1ZM153 205h1v1h-1ZM154 205h1v1h-1ZM155 204h1V205h-1ZM156 204h1v1h-1ZM157 204h1v1h-1ZM158 204h1v1h-1ZM159 204h1v1h-1ZM160 203h1V204h-1ZM161 203h1v1h-1ZM162 203h1v1h-1ZM163 203h1v1h-1ZM164 203h1v1h-1ZM165 204h1V209h-1ZM166 209h1V217h-1ZM167 210h1V216h-1ZM168 205h1V210h-1ZM169 202h1V205h-1ZM170 202h1v1h-1ZM171 202h1v1h-1ZM172 201h1V202h-1ZM173 201h1v1h-1ZM174 201h1v1h-1ZM175 201h1v1h-1ZM176 201h1v1h-1ZM177 200h1V201h-1ZM178 200h1v1h-1ZM179 200h1v1h-1ZM180 200h1v1h-1ZM181 200h1v1h-1ZM182 200h1v1h-1ZM183 199h1V200h-1ZM184 199h1v1h-1ZM185 199h1v1h-1ZM186 199h1v1h-1ZM187 199h1v1h-1ZM188 199h1v1h-1ZM189 198h1V199h-1ZM190 198h1v1h-1ZM191 198h1v1h-1ZM192 198h1v1h-1ZM193 198h1v1h-1ZM194 198h1v1h-1ZM195 197h1V198h-1ZM196 197h1v1h-1ZM197 198h1V205h-1ZM198 205h1V213h-1ZM199 205h1V212h-1ZM200 200h1V205h-1ZM201 196h1V200h-1ZM202 196h1v1h-1ZM203 196h1v1h-1ZM204 196h1v1h-1ZM205 196h1v1h-1ZM206 196h1v1h-1ZM207 196h1v1h-1ZM208 195h1V196h-1ZM209 195h1v1h-1ZM210 195h1v1h-1ZM211 195h1v1h-1ZM212 195h1v1h-1ZM213 195h1v1h-1ZM214 194h1V195h-1ZM215 194h1v1h-1ZM216 194h1v1h-1ZM217 194h1v1h-1ZM218 194h1v1h-1ZM219 194h1v1h-1ZM220 193h1V194h-1ZM221 193h1v1h-1ZM222 193h1v1h-1ZM223 193h1v1h-1ZM224 193h1v1h-1ZM225 194h1V201h-1ZM226 201h1V210h-1ZM227 202h1V209h-1ZM228 196h1V202h-1ZM229 192h1V196h-1ZM230 192h1v1h-1ZM231 192h1v1h-1ZM232 192h1v1h-1ZM233 191h1V192h-1ZM234 191h1v1h-1ZM235 191h1v1h-1ZM236 191h1v1h-1ZM237 191h1v1h-1ZM238 191h1v1h-1ZM239 191h1v1h-1ZM240 192h1V199h-1ZM241 199h1V209h-1ZM242 200h1V208h-1ZM243 194h1V200h-1ZM244 190h1V194h-1ZM245 190h1v1h-1ZM246 190h1v1h-1ZM247 191h1V196h-1ZM248 196h1V204h-1ZM249 197h1V203h-1ZM250 192h1V197h-1ZM251 189h1V192h-1ZM252 189h1v1h-1ZM253 189h1v1h-1ZM254 188h1V189h-1ZM255 188h1v1h-1ZM256 188h1v1h-1ZM257 188h1v1h-1ZM258 188h1v1h-1ZM259 188h1v1h-1ZM260 188h1v1h-1ZM261 187h1V188h-1ZM262 187h1v1h-1ZM263 187h1v1h-1ZM264 187h1v1h-1ZM265 187h1v1h-1ZM266 187h1v1h-1ZM267 187h1v1h-1ZM268 186h1V187h-1ZM269 186h1v1h-1ZM270 186h1v1h-1ZM271 186h1v1h-1ZM272 186h1v1h-1ZM273 186h1v1h-1ZM274 186h1v1h-1ZM275 187h1V194h-1ZM276 194h1V205h-1ZM277 195h1V204h-1ZM278 189h1V195h-1ZM279 185h1V189h-1ZM280 185h1v1h-1ZM281 185h1v1h-1ZM282 184h1V185h-1ZM283 184h1v1h-1ZM284 184h1v1h-1ZM285 184h1v1h-1ZM286 184h1v1h-1ZM287 184h1v1h-1ZM288 184h1v1h-1ZM289 183h1V184h-1ZM290 183h1v1h-1ZM291 183h1v1h-1ZM292 183h1v1h-1ZM293 183h1v1h-1ZM294 183h1v1h-1ZM295 183h1v1h-1ZM296 182h1V183h-1ZM297 182h1v1h-1ZM298 182h1v1h-1ZM299 182h1v1h-1ZM300 183h1V192h-1ZM301 192h1V204h-1ZM302 193h1V203h-1ZM303 186h1V193h-1ZM304 181h1V186h-1ZM305 181h1v1h-1ZM306 181h1v1h-1ZM307 181h1v1h-1ZM308 181h1v1h-1ZM309 181h1v1h-1ZM310 181h1v1h-1ZM311 180h1V181h-1ZM312 180h1v1h-1ZM313 180h1v1h-1ZM314 180h1v1h-1ZM315 180h1v1h-1ZM316 180h1v1h-1ZM317 180h1v1h-1ZM318 180h1v1h-1ZM319 179h1V180h-1ZM320 179h1v1h-1ZM321 179h1v1h-1ZM322 179h1v1h-1ZM323 179h1v1h-1ZM324 179h1v1h-1ZM325 179h1v1h-1ZM326 179h1v1h-1ZM327 178h1V179h-1ZM328 178h1v1h-1ZM329 178h1v1h-1ZM330 178h1v1h-1ZM331 178h1v1h-1ZM332 179h1V189h-1ZM333 189h1V201h-1ZM334 190h1V200h-1ZM335 182h1V190h-1ZM336 177h1V182h-1ZM337 177h1v1h-1ZM338 177h1v1h-1ZM339 177h1v1h-1ZM340 177h1v1h-1ZM341 177h1v1h-1ZM342 176h1V177h-1ZM343 176h1v1h-1ZM344 176h1v1h-1ZM345 176h1v1h-1ZM346 176h1v1h-1ZM347 177h1V187h-1ZM348 187h1V199h-1ZM349 188h1V198h-1ZM350 180h1V188h-1ZM351 175h1V180h-1ZM352 175h1v1h-1ZM353 175h1v1h-1ZM354 175h1v1h-1ZM355 175h1v1h-1ZM356 175h1v1h-1ZM357 175h1v1h-1ZM358 174h1V175h-1ZM359 174h1v1h-1ZM360 174h1v1h-1ZM361 174h1v1h-1ZM362 174h1v1h-1ZM363 174h1v1h-1ZM364 174h1v1h-1ZM365 174h1v1h-1ZM366 173h1V174h-1ZM367 173h1v1h-1ZM368 173h1v1h-1ZM369 173h1v1h-1ZM370 173h1v1h-1ZM371 173h1v1h-1ZM372 173h1v1h-1ZM373 173h1v1h-1ZM374 172h1V173h-1ZM375 172h1v1h-1ZM376 172h1v1h-1ZM377 172h1v1h-1ZM378 172h1v1h-1ZM379 173h1V184h-1ZM380 184h1V197h-1ZM381 185h1V196h-1ZM382 177h1V185h-1ZM383 171h1V177h-1ZM384 171h1v1h-1ZM385 171h1v1h-1ZM386 171h1v1h-1ZM387 171h1v1h-1ZM388 171h1v1h-1ZM389 171h1v1h-1ZM390 171h1v1h-1ZM391 170h1V171h-1ZM392 170h1v1h-1ZM393 170h1v1h-1ZM394 170h1v1h-1ZM395 170h1v1h-1ZM396 170h1v1h-1ZM397 170h1v1h-1ZM398 170h1v1h-1ZM399 169h1V170h-1ZM400 169h1v1h-1ZM401 169h1v1h-1ZM402 169h1v1h-1ZM403 169h1v1h-1ZM404 170h1V182h-1ZM405 182h1V196h-1ZM406 183h1V195h-1ZM407 174h1V183h-1ZM408 168h1V174h-1ZM409 168h1v1h-1ZM410 168h1v1h-1ZM411 168h1v1h-1ZM412 168h1v1h-1ZM413 168h1v1h-1ZM414 168h1v1h-1ZM415 168h1v1h-1ZM416 168h1v1h-1ZM417 167h1V168h-1ZM418 167h1v1h-1ZM419 167h1v1h-1ZM420 167h1v1h-1ZM421 167h1v1h-1ZM422 167h1v1h-1ZM423 167h1v1h-1ZM424 167h1v1h-1ZM425 166h1V167h-1ZM426 166h1v1h-1ZM427 166h1v1h-1ZM428 166h1v1h-1ZM429 166h1v1h-1ZM430 166h1v1h-1ZM431 166h1v1h-1ZM432 167h1V179h-1ZM433 179h1V195h-1ZM434 181h1V194h-1ZM435 171h1V181h-1ZM436 165h1V171h-1ZM437 165h1v1h-1ZM438 165h1v1h-1ZM439 165h1v1h-1ZM440 165h1v1h-1ZM441 165h1v1h-1ZM442 165h1v1h-1ZM443 164h1V165h-1ZM444 164h1v1h-1ZM445 164h1v1h-1ZM446 164h1v1h-1ZM447 164h1v1h-1ZM448 164h1v1h-1ZM449 164h1v1h-1Z" fill="#dcdcdc"/>
<rect x="454" y="139" width="1" height="134" fill="#e0e0e0"/>
<rect x="46" y="299" width="422" height="137" fill="#000"/>
<rect x="48" y="301" width="418" height="134" fill="url(#bgb)"/>
<rect x="57" y="301" width="1" height="135" fill="#0000b0"/>
<rect x="66" y="301" width="1" height="135" fill="#0000b0"/>
<rect x="75" y="301" width="1" height="135" fill="#0000b0"/>
<rect x="85" y="301" width="1" height="135" fill="#0000b0"/>
<rect x="94" y="301" width="1" height="135" fill="#0000ff"/>
<rect x="103" y="301" width="1" height="135" fill="#0000b0"/>
<rect x="113" y="301" width="1" height="135" fill="#0000b0"/>
<rect x="122" y="301" width="1" height="135" fill="#0000b0"/>
<rect x="131" y="301" width="1" height="135" fill="#0000b0"/>
<rect x="140" y="301" width="1" height="135" fill="#0000ff"/>
<rect x="150" y="301" width="1" height="135" fill="#0000b0"/>
<rect x="159" y="301" width="1" height="135" fill="#0000b0"/>
<rect x="168" y="301" width="1" height="135" fill="#0000b0"/>
<rect x="178" y="301" width="1" height="135" fill="#0000b0"/>
<rect x="187" y="301" width="1" height="135" fill="#0000ff"/>
<rect x="196" y="301" width="1" height="135" fill="#0000b0"/>
<rect x="205" y="301" width="1" height="135" fill="#0000b0"/>
<rect x="215" y="301" width="1" height="135" fill="#0000b0"/>
<rect x="224" y="301" width="1" height="135" fill="#0000b0"/>
<rect x="233" y="301" width="1" height="135" fill="#0000ff"/>
<rect x="243" y="301" width="1" height="135" fill="#0000b0"/>
<rect x="252" y="301" width="1" height="135" fill="#0000b0"/>
<rect x="261" y="301" width="1" height="135" fill="#0000b0"/>
<rect x="270" y="301" width="1" height="135" fill="#0000b0"/>
<rect x="280" y="301" width="1" height="135" fill="#0000ff"/>
<rect x="289" y="301" width="1" height="135" fill="#0000b0"/>
<rect x="298" y="301" width="1" height="135" fill="#0000b0"/>
<rect x="308" y="301" width="1" height="135" fill="#0000b0"/>
<rect x="317" y="301" width="1" height="135" fill="#0000b0"/>
<rect x="326" y="301" width="1" height="135" fill="#0000ff"/>
<rect x="335" y="301" width="1" height="135" fill="#0000b0"/>
<rect x="345" y="301" width="1" height="135" fill="#0000b0"/>
<rect x="354" y="301" width="1" height="135" fill="#0000b0"/>
<rect x="363" y="301" width="1" height="135" fill="#0000b0"/>
<rect x="373" y="301" width="1" height="135" fill="#0000ff"/>
<rect x="382" y="301" width="1" height="135" fill="#0000b0"/>
<rect x="391" y="301" width="1" height="135" fill="#0000b0"/>
<rect x="401" y="301" width="1" height="135" fill="#0000b0"/>
<rect x="410" y="301" width="1" height="135" fill="#0000b0"/>
<rect x="419" y="301" width="1" height="135" fill="#0000ff"/>
<rect x="428" y="301" width="1" height="135" fill="#0000b0"/>
<rect x="438" y="301" width="1" height="135" fill="#0000b0"/>
<rect x="447" y="301" width="1" height="135" fill="#0000b0"/>
<rect x="456" y="301" width="1" height="135" fill="#0000b0"/>
<rect x="45" y="301" width="425" height="1" fill="#0000ff"/>
<rect x="46" y="315" width="422" height="1" fill="#0000b0"/>
<rect x="45" y="328" width="425" height="1" fill="#0000ff"/>
<rect x="46" y="341" width="422" height="1" fill="#0000b0"/>
<rect x="45" y="355" width="425" height="1" fill="#0000ff"/>
<rect x="46" y="368" width="422" height="1" fill="#0000b0"/>
<rect x="45" y="381" width="425" height="1" fill="#0000ff"/>
<rect x="46" y="395" width="422" height="1" fill="#0000b0"/>
<rect x="45" y="408" width="425" height="1" fill="#0000ff"/>
<rect x="46" y="422" width="422" height="1" fill="#0000b0"/>
<rect x="45" y="435" width="425" height="1" fill="#0000ff"/>
<rect x="466" y="308" width="2" height="1" fill="#0000ff"/>
<rect x="466" y="321" width="2" height="1" fill="#0000ff"/>
<rect x="466" y="335" width="2" height="1" fill="#0000ff"/>
<rect x="466" y="348" width="2" height="1" fill="#0000ff"/>
<rect x="466" y="361" width="2" height="1" fill="#0000ff"/>
<rect x="466" y="375" width="2" height="1" fill="#0000ff"/>
<rect x="466" y="388" width="2" height="1" fill="#0000ff"/>
<rect x="466" y="401" width="2" height="1" fill="#0000ff"/>
<rect x="466" y="415" width="2" height="1" fill="#0000ff"/>
<rect x="466" y="428" width="2" height="1" fill="#0000ff"/>
<path d="M51 341h1V435h-1ZM52 422h2V435h-2ZM56 382h1V435h-1ZM77 422h1V435h-1ZM103 355h1V435h-1ZM108 422h1V435h-1ZM116 368h1V435h-1ZM120 408h1V435h-1ZM128 422h1V435h-1ZM135 422h1V435h-1ZM144 422h1V435h-1ZM147 395h1V435h-1ZM157 368h1V435h-1ZM156 382h3V435h-3ZM159 395h1V435h-1ZM167 422h1V435h-1ZM179 395h1V435h-1ZM199 422h1V435h-1ZM201 422h1V435h-1ZM228 422h1V435h-1ZM251 422h1V435h-1ZM277 422h1V435h-1ZM285 408h1V435h-1ZM289 422h2V435h-2ZM290 408h1V435h-1ZM292 408h1V435h-1ZM303 422h1V435h-1ZM328 408h1V435h-1ZM335 422h1V435h-1ZM349 422h1V435h-1ZM365 382h1V435h-1ZM365 395h2V435h-2ZM381 408h1V435h-1ZM408 422h1V435h-1ZM415 408h1V435h-1ZM434 422h2V435h-2ZM435 408h1V435h-1Z" fill="#33ff00"/>
<path d="M48 385h1V387h-1ZM49 386h1V388h-1ZM50 387h1V390h-1ZM51 387h1V390h-1ZM52 388h1V390h-1ZM53 389h1V391h-1ZM54 389h1V391h-1ZM55 389h1V391h-1ZM56 390h1V392h-1ZM57 389h1V392h-1ZM58 388h1V391h-1ZM59 389h1V392h-1ZM60 391h1V393h-1ZM61 391h1V393h-1ZM62 390h1V393h-1ZM63 390h1V392h-1ZM64 389h1V392h-1ZM65 389h1V391h-1ZM66 390h1V392h-1ZM67 389h1V392h-1ZM68 388h1V391h-1ZM69 387h1V390h-1ZM70 388h1V390h-1ZM71 387h1V390h-1ZM72 388h1V390h-1ZM73 387h1V390h-1ZM74 388h1V391h-1ZM75 387h1V391h-1ZM76 388h1V390h-1ZM77 388h1V390h-1ZM78 388h1V390h-1ZM79 388h1V390h-1ZM80 389h1V392h-1ZM81 388h1V392h-1ZM82 387h1V390h-1ZM83 386h1V389h-1ZM84 386h1V388h-1ZM85 387h1V389h-1ZM86 386h1V389h-1ZM87 387h1V389h-1ZM88 388h1V390h-1ZM89 387h1V390h-1ZM90 385h1V389h-1ZM91 385h1V387h-1ZM92 385h1V387h-1ZM93 385h1V387h-1ZM94 386h1V388h-1ZM95 385h1V388h-1ZM96 384h1V387h-1ZM97 383h1V386h-1ZM98 384h1V386h-1ZM99 384h1V386h-1ZM100 383h1V386h-1ZM101 383h1V385h-1ZM102 382h1V385h-1ZM103 382h1V384h-1ZM104 381h1V384h-1ZM105 382h1V384h-1ZM106 382h1V384h-1ZM107 383h1V386h-1ZM108 384h1V386h-1ZM109 384h1V386h-1ZM110 384h1V386h-1ZM111 382h1V386h-1ZM112 382h1V384h-1ZM113 381h1V384h-1ZM114 382h1V385h-1ZM115 380h1V385h-1ZM116 381h1V383h-1ZM117 381h1V383h-1ZM118 379h1V383h-1ZM119 380h1V382h-1ZM120 381h1V383h-1ZM121 381h1V383h-1ZM122 379h1V383h-1ZM123 380h1V383h-1ZM124 380h1V383h-1ZM125 381h1V383h-1ZM126 381h1V383h-1ZM127 380h1V383h-1ZM128 380h1V382h-1ZM129 381h1V383h-1ZM130 381h1V383h-1ZM131 379h1V383h-1ZM132 379h1V381h-1ZM133 379h1V381h-1ZM134 379h1V381h-1ZM135 380h1V382h-1ZM136 378h1V382h-1ZM137 379h1V382h-1ZM138 379h1V382h-1ZM139 377h1V381h-1ZM140 378h1V380h-1ZM141 377h1V380h-1ZM142 376h1V379h-1ZM143 377h1V379h-1ZM144 377h1V379h-1ZM145 377h1V379h-1ZM146 377h1V379h-1ZM147 377h1V379h-1ZM148 376h1V379h-1ZM149 376h1V378h-1ZM150 376h1V378h-1ZM151 377h1V380h-1ZM152 379h1V381h-1ZM153 377h1V381h-1ZM154 376h1V379h-1ZM155 377h1V379h-1ZM156 378h1V381h-1ZM157 375h1V381h-1ZM158 375h1V377h-1ZM159 373h1V377h-1ZM160 374h1V376h-1ZM161 375h1V377h-1ZM162 374h1V377h-1ZM163 372h1V376h-1ZM164 373h1V375h-1ZM165 373h1V375h-1ZM166 373h1V375h-1ZM167 373h1V375h-1ZM168 374h1V376h-1ZM169 374h1V376h-1ZM170 374h1V376h-1ZM171 373h1V376h-1ZM172 374h1V376h-1ZM173 373h1V376h-1ZM174 373h1V375h-1ZM175 373h1V375h-1ZM176 371h1V375h-1ZM177 372h1V374h-1ZM178 372h1V374h-1ZM179 373h1V375h-1ZM180 373h1V375h-1ZM181 372h1V375h-1ZM182 372h1V374h-1ZM183 372h1V374h-1ZM184 371h1V374h-1ZM185 371h1V373h-1ZM186 371h1V373h-1ZM187 372h1V374h-1ZM188 372h1V374h-1ZM189 372h1V374h-1ZM190 372h1V374h-1ZM191 372h1V374h-1ZM192 373h1V376h-1ZM193 373h1V376h-1ZM194 374h1V377h-1ZM195 375h1V377h-1ZM196 374h1V377h-1ZM197 375h1V377h-1ZM198 373h1V377h-1ZM199 374h1V377h-1ZM200 374h1V377h-1ZM201 374h1V376h-1ZM202 372h1V376h-1ZM203 372h1V374h-1ZM204 372h1V374h-1ZM205 372h1V374h-1ZM206 373h1V375h-1ZM207 373h1V375h-1ZM208 371h1V375h-1ZM209 372h1V376h-1ZM210 373h1V376h-1ZM211 373h1V375h-1ZM212 373h1V375h-1ZM213 374h1V376h-1ZM214 372h1V376h-1ZM215 371h1V374h-1ZM216 372h1V375h-1ZM217 371h1V375h-1ZM218 370h1V373h-1ZM219 371h1V374h-1ZM220 372h1V374h-1ZM221 373h1V375h-1ZM222 373h1V375h-1ZM223 372h1V375h-1ZM224 370h1V374h-1ZM225 370h1V372h-1ZM226 371h1V374h-1ZM227 371h1V374h-1ZM228 371h1V373h-1ZM229 372h1V374h-1ZM230 372h1V374h-1ZM231 370h1V374h-1ZM232 368h1V372h-1ZM233 369h1V372h-1ZM234 368h1V372h-1ZM235 368h1V370h-1ZM236 369h1V371h-1ZM237 369h1V371h-1ZM238 369h1V371h-1ZM239 367h1V371h-1ZM240 366h1V369h-1ZM241 365h1V368h-1ZM242 366h1V368h-1ZM243 366h1V368h-1ZM244 367h1V369h-1ZM245 368h1V371h-1ZM246 369h1V371h-1ZM247 370h1V373h-1ZM248 372h1V374h-1ZM249 372h1V374h-1ZM250 370h1V374h-1ZM251 369h1V372h-1ZM252 370h1V373h-1ZM253 371h1V373h-1ZM254 371h1V373h-1ZM255 372h1V374h-1ZM256 371h1V374h-1ZM257 370h1V373h-1ZM258 370h1V372h-1ZM259 370h1V372h-1ZM260 370h1V372h-1ZM261 371h1V374h-1ZM262 371h1V374h-1ZM263 370h1V373h-1ZM264 370h1V372h-1ZM265 370h1V372h-1ZM266 370h1V372h-1ZM267 369h1V372h-1ZM268 370h1V372h-1ZM269 370h1V372h-1ZM270 370h1V372h-1ZM271 370h1V372h-1ZM272 369h1V372h-1ZM273 369h1V371h-1ZM274 369h1V371h-1ZM275 368h1V371h-1ZM276 368h1V370h-1ZM277 368h1V370h-1ZM278 369h1V371h-1ZM279 368h1V371h-1ZM280 369h1V372h-1ZM281 369h1V372h-1ZM282 370h1V372h-1ZM283 370h1V372h-1ZM284 369h1V372h-1ZM285 368h1V371h-1ZM286 369h1V372h-1ZM287 370h1V372h-1ZM288 370h1V372h-1ZM289 368h1V372h-1ZM290 369h1V372h-1ZM291 369h1V372h-1ZM292 367h1V371h-1ZM293 368h1V371h-1ZM294 370h1V372h-1ZM295 369h1V372h-1ZM296 370h1V372h-1ZM297 369h1V372h-1ZM298 369h1V371h-1ZM299 368h1V371h-1ZM300 368h1V370h-1ZM301 369h1V371h-1ZM302 367h1V371h-1ZM303 367h1V369h-1ZM304 368h1V370h-1ZM305 369h1V371h-1ZM306 370h1V372h-1ZM307 369h1V372h-1ZM308 369h1V371h-1ZM309 369h1V371h-1ZM310 369h1V371h-1ZM311 368h1V371h-1ZM312 368h1V370h-1ZM313 368h1V370h-1ZM314 368h1V370h-1ZM315 367h1V370h-1ZM316 367h1V369h-1ZM317 368h1V370h-1ZM318 369h1V371h-1ZM319 367h1V371h-1ZM320 367h1V369h-1ZM321 367h1V369h-1ZM322 366h1V369h-1ZM323 367h1V369h-1ZM324 368h1V370h-1ZM325 366h1V370h-1ZM326 367h1V369h-1ZM327 368h1V371h-1ZM328 368h1V371h-1ZM329 368h1V370h-1ZM330 368h1V370h-1ZM331 369h1V371h-1ZM332 369h1V371h-1ZM333 368h1V371h-1ZM334 369h1V371h-1ZM335 368h1V371h-1ZM336 369h1V371h-1ZM337 367h1V371h-1ZM338 368h1V370h-1ZM339 366h1V370h-1ZM340 366h1V368h-1ZM341 366h1V368h-1ZM342 367h1V369h-1ZM343 368h1V370h-1ZM344 369h1V371h-1ZM345 369h1V371h-1ZM346 369h1V371h-1ZM347 369h1V371h-1ZM348 369h1V371h-1ZM349 367h1V371h-1ZM350 367h1V369h-1ZM351 368h1V370h-1ZM352 368h1V370h-1ZM353 368h1V370h-1ZM354 369h1V371h-1ZM355 368h1V371h-1ZM356 367h1V370h-1ZM357 367h1V369h-1ZM358 367h1V369h-1ZM359 368h1V370h-1ZM360 368h1V370h-1ZM361 368h1V370h-1ZM362 367h1V370h-1ZM363 368h1V370h-1ZM364 368h1V370h-1ZM365 368h1V370h-1ZM366 367h1V370h-1ZM367 368h1V370h-1ZM368 368h1V370h-1ZM369 368h1V370h-1ZM370 368h1V370h-1ZM371 367h1V370h-1ZM372 366h1V369h-1ZM373 367h1V369h-1ZM374 367h1V369h-1ZM375 368h1V371h-1ZM376 368h1V371h-1ZM377 367h1V370h-1ZM378 366h1V369h-1ZM379 366h1V368h-1ZM380 367h1V370h-1ZM381 367h1V370h-1ZM382 368h1V370h-1ZM383 367h1V370h-1ZM384 367h1V369h-1ZM385 366h1V369h-1ZM386 366h1V368h-1ZM387 367h1V370h-1ZM388 366h1V370h-1ZM389 367h1V370h-1ZM390 369h1V371h-1ZM391 369h1V371h-1ZM392 368h1V371h-1ZM393 368h1V370h-1ZM394 369h1V371h-1ZM395 368h1V371h-1ZM396 366h1V370h-1ZM397 366h1V368h-1ZM398 367h1V369h-1ZM399 368h1V371h-1ZM400 368h1V371h-1ZM401 367h1V370h-1ZM402 367h1V369h-1ZM403 368h1V370h-1ZM404 368h1V370h-1ZM405 368h1V370h-1ZM406 368h1V370h-1ZM407 368h1V370h-1ZM408 369h1V371h-1ZM409 368h1V371h-1ZM410 367h1V370h-1ZM411 366h1V369h-1ZM412 366h1V368h-1ZM413 366h1V368h-1ZM414 366h1V368h-1ZM415 367h1V369h-1ZM416 367h1V369h-1ZM417 367h1V369h-1ZM418 367h1V369h-1ZM419 367h1V369h-1ZM420 367h1V369h-1ZM421 367h1V369h-1ZM422 368h1V371h-1ZM423 367h1V371h-1ZM424 367h1V369h-1ZM425 367h1V369h-1ZM426 368h1V370h-1ZM427 369h1V371h-1ZM428 368h1V371h-1ZM429 367h1V370h-1ZM430 367h1V369h-1ZM431 367h1V369h-1ZM432 367h1V369h-1ZM433 368h1V370h-1ZM434 369h1V371h-1ZM435 368h1V371h-1ZM436 369h1V371h-1ZM437 369h1V371h-1ZM438 368h1V371h-1ZM439 369h1V371h-1ZM440 368h1V371h-1ZM441 367h1V370h-1ZM442 368h1V370h-1ZM443 368h1V370h-1ZM444 367h1V370h-1ZM445 368h1V370h-1ZM446 369h1V371h-1ZM447 367h1V371h-1ZM448 368h1V371h-1ZM449 370h1V373h-1ZM450 370h1V373h-1ZM451 371h1V373h-1ZM452 370h1V373h-1Z" fill="#ff00ff"/>
<rect x="454" y="301" width="1" height="134" fill="#e0e0e0"/>
</svg>

<!-- axis labels -->
<style>.al{position:absolute;font-size:12px;line-height:14px;white-space:nowrap}</style>
<div class="al r" style="left:21px;width:21px;top:131px">20</div>
<div class="al r" style="left:21px;width:21px;top:157px">16</div>
<div class="al r" style="left:21px;width:21px;top:184px">12</div>
<div class="al r" style="left:21px;width:21px;top:211px">8</div>
<div class="al r" style="left:21px;width:21px;top:237px">4</div>
<div class="al" style="left:470px;top:131px">20</div>
<div class="al" style="left:470px;top:157px">16</div>
<div class="al" style="left:470px;top:184px">12</div>
<div class="al" style="left:470px;top:211px">8</div>
<div class="al" style="left:470px;top:237px">4</div>
<div class="al" style="left:42px;top:275px">0.0</div>
<div class="al" style="left:87px;top:275px">0.5</div>
<div class="al" style="left:134px;top:275px">1.0</div>
<div class="al" style="left:181px;top:275px">1.5</div>
<div class="al" style="left:226px;top:275px">2.0</div>
<div class="al" style="left:273px;top:275px">2.5</div>
<div class="al" style="left:319px;top:275px">3.0</div>
<div class="al" style="left:366px;top:275px">3.5</div>
<div class="al" style="left:412px;top:275px">4.0</div>
<div class="al" style="left:459px;top:275px">4.5</div>

<div class="al r" style="left:21px;width:21px;top:293px">10</div>
<div class="al r" style="left:21px;width:21px;top:320px">8</div>
<div class="al r" style="left:21px;width:21px;top:346px">6</div>
<div class="al r" style="left:21px;width:21px;top:373px">4</div>
<div class="al r" style="left:21px;width:21px;top:400px">2</div>
<div class="al" style="left:470px;top:293px">20</div>
<div class="al" style="left:470px;top:320px">16</div>
<div class="al" style="left:470px;top:346px">12</div>
<div class="al" style="left:470px;top:373px">8</div>
<div class="al" style="left:470px;top:400px">4</div>
<div class="al" style="left:42px;top:437px">0.0</div>
<div class="al" style="left:87px;top:437px">0.5</div>
<div class="al" style="left:134px;top:437px">1.0</div>
<div class="al" style="left:181px;top:437px">1.5</div>
<div class="al" style="left:226px;top:437px">2.0</div>
<div class="al" style="left:273px;top:437px">2.5</div>
<div class="al" style="left:319px;top:437px">3.0</div>
<div class="al" style="left:366px;top:437px">3.5</div>
<div class="al" style="left:412px;top:437px">4.0</div>
<div class="al" style="left:459px;top:437px">4.5</div>

<!-- right panel -->
<div class="gb" style="left:491px;top:132px;width:140px;height:85px"></div>
<div class="gl" style="left:498px;top:127px">Disk-Info</div>
<div class="t" style="left:500px;top:142px">Typ:</div>
<div class="t" style="left:500px;top:159px">ID:</div>
<div class="t" style="left:500px;top:177px">Datum:</div>
<div class="t" style="left:500px;top:195px">Label:</div>
<div class="t v" style="left:545px;top:142px">DVD+R</div>
<div class="t v" style="left:545px;top:159px">SONY D21</div>
<div class="t v" style="left:545px;top:177px">21 Jan 2009</div>
<div class="t v" style="left:545px;top:195px">-</div>

<div class="gb" style="left:491px;top:223px;width:140px;height:205px"></div>
<div class="gl" style="left:498px;top:217px;background:#f9f9f8">Einstellungen</div>
<div class="a" style="left:500px;top:233px;width:84px;height:21px;border:1px solid #7f9db9;background:#fff"></div>
<div class="t" style="left:505px;top:238px">8 X</div>
<div class="a" style="left:567px;top:235px;width:15px;height:17px;border-radius:2px;background:linear-gradient(135deg,#e0e8fe,#b4cbfa)"><svg class="a" style="left:2px;top:5px" width="11" height="8"><path d="M1.5 1.5 L5.5 5.5 L9.5 1.5" stroke="#4d6185" stroke-width="2.2" fill="none"/></svg></div>
<div class="a" style="left:592px;top:232px;width:23px;height:23px;background:#ece9d8;border:1px solid;border-color:#fff #716f64 #716f64 #fff;box-shadow:inset -1px -1px 0 #aca899"></div>
<svg class="a" style="left:596px;top:235px" width="14" height="16">
<rect x="0.7" y="0.7" width="12.6" height="14.6" fill="#fff" stroke="#000" stroke-width="1.4"/>
<g fill="#008a00">
<rect x="3" y="4.5" width="1.4" height="3.5"/>
<rect x="3" y="3.3" width="4.5" height="1.4"/>
<path d="M7 1.3 L10 4 L7 6.7Z"/>
<rect x="9.6" y="8" width="1.4" height="3.5"/>
<rect x="6.5" y="11.3" width="4.5" height="1.4"/>
<path d="M6.8 9.3 L3.8 12 L6.8 14.7Z"/>
</g>
</svg>
<div class="t" style="left:502px;top:265px">Start:</div>
<div class="t" style="left:502px;top:288px">Ende:</div>
<div class="a" style="left:554px;top:259px;width:60px;height:20px;border:1px solid #7f9db9;background:#fff"></div>
<div class="t" style="left:557px;top:263px">0000 MB</div>
<div class="a" style="left:554px;top:282px;width:60px;height:20px;border:1px solid #7f9db9;background:#fff"></div>
<div class="t" style="left:557px;top:286px">4481 MB</div>

<div class="cb" style="top:304px"></div>
<div class="t" style="left:518px;top:305px">Schnelles Scannen</div>
<div class="cb" style="top:322px"><svg class="ck" width="9" height="9"><path d="M0.5 3.5 L3.5 6.5 L8.5 1" stroke="#21a121" stroke-width="2.2" fill="none"/></svg></div>
<div class="t" style="left:518px;top:323px">C1/PIE anzeigen</div>
<div class="cb" style="top:337px"><svg class="ck" width="9" height="9"><path d="M0.5 3.5 L3.5 6.5 L8.5 1" stroke="#21a121" stroke-width="2.2" fill="none"/></svg></div>
<div class="t" style="left:518px;top:338px">C2/PIF anzeigen</div>
<div class="cb" style="top:353px"><svg class="ck" width="9" height="9"><path d="M0.5 3.5 L3.5 6.5 L8.5 1" stroke="#21a121" stroke-width="2.2" fill="none"/></svg></div>
<div class="t" style="left:518px;top:354px">Jitter anzeigen</div>
<div class="cb" style="top:369px"><svg class="ck" width="9" height="9"><path d="M0.5 3.5 L3.5 6.5 L8.5 1" stroke="#21a121" stroke-width="2.2" fill="none"/></svg></div>
<div class="t" style="left:518px;top:370px">Zeige Lesegeschw.</div>
<div class="cb" style="top:385px"><svg class="ck" width="9" height="9"><path d="M0.5 3.5 L3.5 6.5 L8.5 1" stroke="#21a121" stroke-width="2.2" fill="none"/></svg></div>
<div class="t" style="left:518px;top:386px">Zeige Schreibgeschw.</div>
<div class="btn" style="left:528px;top:402px;width:96px;height:21px">Erweitert</div>

<div class="gb" style="left:491px;top:433px;width:140px;height:28px;background:#f3f2ed"></div>
<div class="t" style="left:502px;top:441px">Qualitätsindex:</div>
<div class="t r v" style="left:580px;width:41px;top:441px">96</div>

<div class="gb" style="left:491px;top:466px;width:140px;height:56px;background:#f3f2ed"></div>
<div class="t" style="left:502px;top:475px">Fortschritt:</div>
<div class="t" style="left:502px;top:490px">Position:</div>
<div class="t" style="left:502px;top:506px">Geschwindigkeit:</div>
<div class="t r v" style="left:560px;width:62px;top:475px">100 %</div>
<div class="t r v" style="left:560px;width:62px;top:490px">4480 MB</div>
<div class="t r v" style="left:560px;width:62px;top:506px">8.43 X</div>

<!-- bottom stats -->
<div class="eg" style="left:14px;top:465px;width:146px;height:57px"></div>
<div class="a" style="left:23px;top:461px;width:53px;height:10px;background:#f5f4ef"></div>
<div class="a" style="left:24px;top:462px;width:8px;height:8px;border:1px solid #000;background:#00ffff"></div>
<div class="t" style="left:35px;top:460px">PI Errors</div>
<div class="t" style="left:22px;top:476px">Durchschnitt</div>
<div class="t" style="left:22px;top:491px">Maximum:</div>
<div class="t" style="left:22px;top:506px">Gesamt:</div>
<div class="t r v" style="left:100px;width:50px;top:476px">2.76</div>
<div class="t r v" style="left:100px;width:50px;top:491px">13</div>
<div class="t r v" style="left:100px;width:50px;top:506px">49436</div>

<div class="eg" style="left:172px;top:465px;width:146px;height:57px"></div>
<div class="a" style="left:181px;top:461px;width:64px;height:10px;background:#f5f4ef"></div>
<div class="a" style="left:182px;top:462px;width:8px;height:8px;border:1px solid #000;background:#ffff00"></div>
<div class="t" style="left:193px;top:460px">PI Failures</div>
<div class="t" style="left:181px;top:476px">Durchschnitt</div>
<div class="t" style="left:181px;top:491px">Maximum:</div>
<div class="t" style="left:181px;top:506px">Gesamt:</div>
<div class="t r v" style="left:259px;width:50px;top:476px">0.00</div>
<div class="t r v" style="left:259px;width:50px;top:491px">7</div>
<div class="t r v" style="left:259px;width:50px;top:506px">480</div>

<div class="eg" style="left:331px;top:465px;width:147px;height:43px"></div>
<div class="a" style="left:340px;top:461px;width:35px;height:10px;background:#f5f4ef"></div>
<div class="a" style="left:341px;top:462px;width:8px;height:8px;border:1px solid #000;background:#ff00ff"></div>
<div class="t" style="left:352px;top:460px">Jitter</div>
<div class="t" style="left:340px;top:476px">Durchschnitt</div>
<div class="t" style="left:340px;top:491px">Maximum:</div>
<div class="t r v" style="left:408px;width:60px;top:476px">8.92 %</div>
<div class="t r v" style="left:408px;width:60px;top:491px">10.3 %</div>
<div class="t" style="left:340px;top:510px">PO Ausfälle:</div>
<div class="t r v" style="left:408px;width:60px;top:510px">0</div>
</body></html>
